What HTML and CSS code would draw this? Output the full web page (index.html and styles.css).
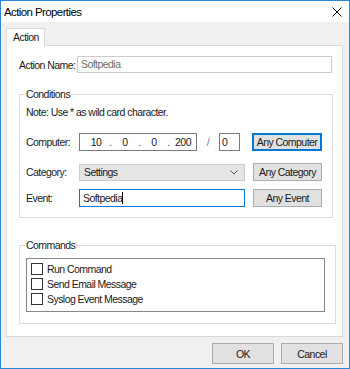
FILE: index.html
```html
<!DOCTYPE html>
<html lang="en">
<head>
    <meta charset="UTF-8">
    <title>Action Properties</title>
    <link rel="stylesheet" href="styles.css">
</head>
<body>
    <div class="window">
        <div class="titlebar">
            <span class="title">Action Properties</span>
            <svg class="close" width="10" height="10" viewBox="0 0 10 10">
                <path d="M0.5 0.5 L9.5 9.5 M9.5 0.5 L0.5 9.5" stroke="#000" stroke-width="1" fill="none"/>
            </svg>
        </div>
        <div class="client">
            <div class="tabs">
                <div class="tab active">Action</div>
            </div>
            <div class="panel">
                <div class="name-row">
                    <label class="name-label">Action Name:</label>
                    <div class="textbox disabled">Softpedia</div>
                </div>

                <fieldset class="group conditions">
                    <legend>Conditions</legend>
                    <div class="note">Note: Use * as wild card character.</div>

                    <div class="row row-computer">
                        <label>Computer:</label>
                        <div class="ipbox">
                            <span class="seg">10</span><span class="dot">.</span>
                            <span class="seg">0</span><span class="dot">.</span>
                            <span class="seg">0</span><span class="dot">.</span>
                            <span class="seg">200</span>
                        </div>
                        <span class="slash">/</span>
                        <div class="textbox mask">0</div>
                        <button class="btn focused">Any Computer</button>
                    </div>

                    <div class="row row-category">
                        <label>Category:</label>
                        <div class="combo">
                            <span>Settings</span>
                            <svg width="8" height="5" viewBox="0 0 8 5">
                                <polyline points="0.5,0.5 4,4 7.5,0.5" stroke="#555" stroke-width="1" fill="none"/>
                            </svg>
                        </div>
                        <button class="btn">Any Category</button>
                    </div>

                    <div class="row row-event">
                        <label>Event:</label>
                        <div class="textbox active-input">Softpedia<span class="caret"></span></div>
                        <button class="btn">Any Event</button>
                    </div>
                </fieldset>

                <fieldset class="group commands">
                    <legend>Commands</legend>
                    <div class="listbox">
                        <div class="item"><span class="check"></span>Run Command</div>
                        <div class="item"><span class="check"></span>Send Email Message</div>
                        <div class="item"><span class="check"></span>Syslog Event Message</div>
                    </div>
                </fieldset>
            </div>
            <div class="footer">
                <button class="btn dlg">OK</button>
                <button class="btn dlg">Cancel</button>
            </div>
        </div>
    </div>
</body>
</html>
```

FILE: styles.css
```css
* {
    box-sizing: border-box;
}
body {
    margin: 0;
    font-family: "Liberation Sans", Arial, sans-serif;
    font-size: 10.5px;
    letter-spacing: -0.55px;
    color: #1a1a1a;
    white-space: nowrap;
}
.window {
    width: 350px;
    height: 369px;
    border: 1px solid #2b88d8;
    background: #f0f0f0;
}
.titlebar {
    height: 21px;
    background: #fff;
    display: flex;
    align-items: center;
    justify-content: space-between;
    padding: 0 7px 0 3px;
}
.title {
    font-size: 11.5px;
    letter-spacing: -0.6px;
    color: #000;
}
.client {
    padding: 6px 6px 0 5px;
}
.tabs {
    display: flex;
}
.tab {
    height: 18px;
    width: 39px;
    padding-left: 6px;
    line-height: 17px;
    background: #fff;
    border: 1px solid #d9d9d9;
    border-bottom: none;
    margin-bottom: -1px;
    position: relative;
    z-index: 1;
}
.panel {
    height: 292px;
    background: #fff;
    border: 1px solid #d9d9d9;
    padding: 10px 9px 0 12px;
}
.name-row {
    display: flex;
    align-items: center;
    height: 17px;
}
.name-label {
    width: 58px;
}
.textbox {
    height: 17px;
    border: 1px solid #7a7a7a;
    background: #fff;
    padding-left: 3px;
    line-height: 15px;
}
.textbox.disabled {
    flex: 1;
    margin-right: 1px;
    border-color: #cccccc;
    color: #6d6d6d;
}
.group {
    margin: 15px 0 0 0;
    border: 1px solid #dcdcdc;
    padding: 0 10px 0 5px;
}
.group legend {
    padding: 0 1px;
    line-height: 12px;
}
.note {
    margin: 5px 0 0 1px;
    line-height: 14px;
}
.row {
    display: flex;
    align-items: center;
    margin-left: 1px;
}
.row label {
    width: 53px;
}
.row-computer {
    margin-top: 14px;
    height: 18px;
}
.row-category {
    margin-top: 12px;
    height: 18px;
}
.row-event {
    margin-top: 8px;
    height: 18px;
    margin-bottom: 10px;
}
.ipbox {
    width: 118px;
    height: 18px;
    border: 1px solid #7a7a7a;
    display: flex;
    align-items: center;
    padding-left: 5px;
}
.seg {
    width: 22px;
    text-align: center;
}
.dot {
    width: 7px;
    text-align: center;
    color: #555;
}
.slash {
    width: 22px;
    text-align: center;
    color: #777;
}
.textbox.mask {
    width: 21px;
    height: 18px;
    line-height: 16px;
    padding-left: 2px;
}
.btn {
    font-family: inherit;
    font-size: 10.5px;
    letter-spacing: -0.55px;
    color: #1a1a1a;
    background: #e1e1e1;
    border: 1px solid #adadad;
    height: 18px;
    width: 69px;
    padding: 0;
    margin-left: auto;
}
.btn.focused {
    border-color: #0078d7;
    box-shadow: inset 0 0 0 1px #0078d7;
}
.row-computer .btn {
    margin-left: auto;
    width: 70px;
}
.combo {
    width: 166px;
    height: 17px;
    background: #e5e5e5;
    border: 1px solid #cccccc;
    display: flex;
    align-items: center;
    justify-content: space-between;
    padding: 0 6px 0 4px;
}
.textbox.active-input {
    width: 166px;
    height: 18px;
    line-height: 16px;
    border-color: #0078d7;
}
.caret {
    display: inline-block;
    width: 1px;
    height: 12px;
    background: #000;
    vertical-align: -2px;
}
.commands {
    margin-top: 21px;
    padding-bottom: 11px;
}
.listbox {
    margin: 7px 0 0 1px;
    width: 299px;
    height: 54px;
    border: 1px solid #828790;
    background: #fff;
    padding: 2px 0 0 4px;
}
.item {
    display: flex;
    align-items: center;
    height: 15px;
}
.check {
    width: 12px;
    height: 12px;
    border: 1px solid #333;
    margin-right: 4px;
}
.footer {
    display: flex;
    justify-content: flex-end;
    gap: 7px;
    margin-top: 6px;
}
.btn.dlg {
    width: 62px;
    height: 21px;
    margin-left: 0;
}
```
